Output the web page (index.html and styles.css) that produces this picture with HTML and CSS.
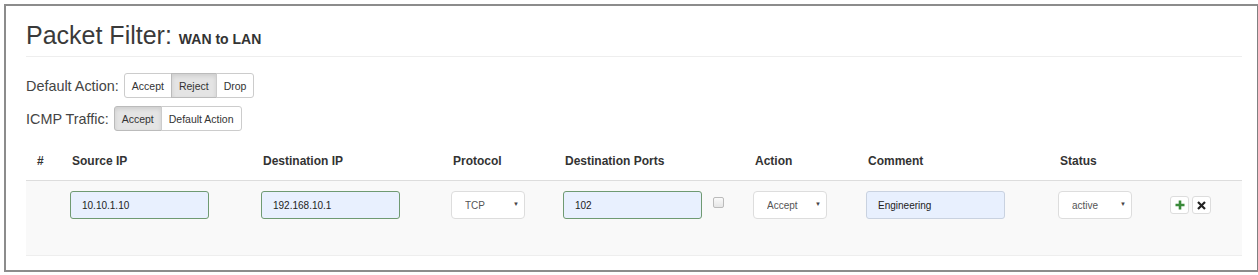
FILE: index.html
```html
<!DOCTYPE html>
<html>
<head>
	<meta charset="utf-8">
	<meta name="viewport" content="width=device-width, initial-scale=1">
	<title>Packet Filter</title>
	<link rel="stylesheet" href="styles.css">
</head>
<body>
	<div class="frame">
		<h2 class="title">Packet Filter: <small>WAN to LAN</small></h2>

		<div class="option">
			<label>Default Action:</label>
			<div class="btn-group">
				<button type="button">Accept</button>
				<button type="button" class="active">Reject</button>
				<button type="button">Drop</button>
			</div>
		</div>
		<div class="option">
			<label>ICMP Traffic:</label>
			<div class="btn-group">
				<button type="button" class="active">Accept</button>
				<button type="button">Default Action</button>
			</div>
		</div>

		<div class="rules">
			<div class="rule-head">
				<div class="num">#</div>
				<div>Source IP</div>
				<div>Destination IP</div>
				<div>Protocol</div>
				<div>Destination Ports</div>
				<div></div>
				<div>Action</div>
				<div>Comment</div>
				<div>Status</div>
				<div></div>
			</div>
			<div class="rule-row">
				<div class="num"></div>
				<div><input class="field valid" type="text" value="10.10.1.10"></div>
				<div><input class="field valid" type="text" value="192.168.10.1"></div>
				<div class="select"><select><option>TCP</option></select></div>
				<div><input class="field valid" type="text" value="102"></div>
				<div><input class="check" type="checkbox"></div>
				<div class="select"><select><option>Accept</option></select></div>
				<div><input class="field" type="text" value="Engineering"></div>
				<div class="select"><select><option>active</option></select></div>
				<div class="tools">
					<button type="button" class="icon add">
						<svg width="10" height="10" viewBox="0 0 10 10"><path d="M5 0.5v9M0.5 5h9" stroke="#3a8a3a" stroke-width="2.6"/></svg>
					</button>
					<button type="button" class="icon del">
						<svg width="9" height="9" viewBox="0 0 9 9"><path d="M1 1l7 7M8 1l-7 7" stroke="#222" stroke-width="2.2"/></svg>
					</button>
				</div>
			</div>
		</div>
	</div>
</body>
</html>
```

FILE: styles.css
```css
body
{
	margin: 0;
	font-family: "Liberation Sans", Arial, sans-serif;
	color: #333;
	background: #fff;
}
.frame
{
	margin: 4px 0 0 4px;
	width: 1216px;
	height: 250px;
	padding: 14px 15px 0 20px;
	border: 2px solid #8c8c8c;
	border-right-color: #808080;
}
.title
{
	margin: 0;
	height: 30px;
	font-size: 25px;
	line-height: 30px;
	font-weight: normal;
	color: #3a3a3a;
	padding-bottom: 6px;
	border-bottom: 1px solid #eee;
}
.title small
{
	font-size: 14px;
	line-height: 1;
	font-weight: bold;
	color: #333;
}
.option
{
	display: flex;
	align-items: center;
	height: 25px;
	margin-top: 8px;
}
.title + .option
{
	margin-top: 16px;
}
.option label
{
	font-size: 14.4px;
	color: #444;
	margin-right: 5px;
}
.btn-group
{
	display: flex;
	height: 25px;
}
.btn-group button
{
	font-family: inherit;
	font-size: 10.5px;
	color: #333;
	background: #fff;
	border: 1px solid #ccc;
	padding: 0 7px;
	margin-left: -1px;
	cursor: pointer;
}
.btn-group button:first-child
{
	margin-left: 0;
	border-radius: 3px 0 0 3px;
}
.btn-group button:last-child
{
	border-radius: 0 3px 3px 0;
}
.btn-group button.active
{
	background: #e4e4e4;
	border-color: #bbb;
	box-shadow: inset 0 2px 4px rgba(0, 0, 0, 0.1);
}
.rules
{
	margin-top: 11px;
}
.rule-head, .rule-row
{
	display: grid;
	grid-template-columns: 44px 191px 190px 112px 150px 40px 113px 192px 112px 66px;
}
.rule-head
{
	height: 38px;
	align-items: center;
	font-size: 12px;
	font-weight: bold;
	color: #333;
	border-bottom: 1px solid #ddd;
}
.rule-head div
{
	padding-left: 2px;
}
.rule-head .num
{
	padding-left: 11px;
}
.rule-row
{
	height: 64px;
	padding-top: 10px;
	background: #f9f9f9;
	border-bottom: 1px solid #eee;
	align-items: start;
}
.field
{
	box-sizing: border-box;
	width: 139px;
	height: 28px;
	padding: 0 11px;
	font-family: inherit;
	font-size: 10px;
	color: #222;
	background: #e8f0fe;
	border: 1px solid #c9d2e0;
	border-radius: 3px;
	outline: none;
}
.field.valid
{
	border-color: #6f9a72;
}
.select
{
	position: relative;
	width: 74px;
}
.select select
{
	-webkit-appearance: none;
	appearance: none;
	box-sizing: border-box;
	width: 74px;
	height: 28px;
	padding: 0 0 0 13px;
	font-family: inherit;
	font-size: 10px;
	color: #555;
	background: #fff;
	border: 1px solid #ddd;
	border-radius: 4px;
	outline: none;
}
.select::after
{
	content: "\25BC";
	position: absolute;
	right: 6px;
	top: 10px;
	font-size: 6px;
	color: #444;
	pointer-events: none;
}
.check
{
	-webkit-appearance: none;
	appearance: none;
	margin: 6px 0 0 0;
	width: 11px;
	height: 11px;
	border: 1px solid #bbb;
	border-radius: 2px;
	background: linear-gradient(#fafafa, #e6e6e6);
}
.tools
{
	display: flex;
	gap: 3px;
	padding-top: 5px;
}
.icon
{
	display: flex;
	align-items: center;
	justify-content: center;
	width: 19px;
	height: 18px;
	padding: 0;
	background: #fff;
	border: 1px solid #ddd;
	border-radius: 3px;
	cursor: pointer;
}
```
